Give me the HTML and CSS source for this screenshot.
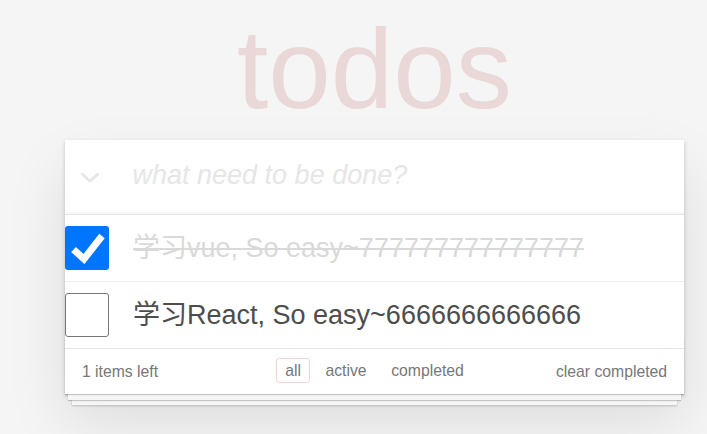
FILE: index.html
```html
<!DOCTYPE html>
<html lang="zh">
<head>
<meta charset="utf-8">
<title>todos</title>
<link rel="stylesheet" href="styles.css">
</head>
<body>
<section class="todoapp">
  <h1 class="title">todos</h1>
  <header class="header">
    <span class="toggle-all">
      <svg width="20" height="11" viewBox="0 0 20 11"><polyline points="1.5,1.5 10,9 18.5,1.5" fill="none" stroke="#e6e6e6" stroke-width="3"/></svg>
    </span>
    <input class="new-todo" placeholder="what need to be done?">
  </header>
  <ul class="todo-list">
    <li class="todo completed">
      <span class="check checked">
        <svg width="44" height="44" viewBox="0 0 44 44"><polyline points="8.5,23.5 19,33 37,10" fill="none" stroke="#fff" stroke-width="7"/></svg>
      </span>
      <label class="todo-label">学习vue, So easy~777777777777777</label>
    </li>
    <li class="todo">
      <span class="check"></span>
      <label class="todo-label">学习React, So easy~6666666666666</label>
    </li>
  </ul>
  <footer class="footer">
    <span class="todo-count">1 items left</span>
    <ul class="filters">
      <li><a class="filter selected">all</a></li>
      <li><a class="filter">active</a></li>
      <li><a class="filter">completed</a></li>
    </ul>
    <span class="clear-completed">clear completed</span>
  </footer>
</section>
</body>
</html>
```
FILE: styles.css
```css
html, body {
  margin: 0;
  padding: 0;
}
body {
  background: #f5f5f5;
  color: #4d4d4d;
  font-family: "Liberation Sans", Arial, "Noto Sans CJK SC", sans-serif;
  font-size: 15.75px;
  line-height: 22px;
  padding: 140px 23px 40px 65px;
}
.todoapp {
  position: relative;
  width: 619px;
  background: #fff;
  box-shadow: 0 2px 4px 0 rgba(0,0,0,0.2), 0 28px 56px 0 rgba(0,0,0,0.1);
}
.title {
  position: absolute;
  top: -127px;
  left: 0;
  right: 0;
  margin: 0;
  font-size: 112.5px;
  line-height: 112.5px;
  font-weight: normal;
  text-align: center;
  color: rgba(175,47,47,0.15);
}
.header {
  display: flex;
  align-items: center;
  height: 74px;
  box-shadow: inset 0 -2px 1px rgba(0,0,0,0.03);
}
.toggle-all {
  width: 67.5px;
  flex: none;
  display: flex;
  align-items: center;
  padding-left: 15px;
  box-sizing: border-box;
  margin-top: 1px;
}
.toggle-all svg { display: block; }
.new-todo {
  flex: 1;
  min-width: 0;
  border: none;
  outline: none;
  background: transparent;
  padding: 0 16px 4px 0;
  margin: 0;
  font-family: inherit;
  font-size: 27px;
  line-height: 37.8px;
  height: 70px;
  color: #4d4d4d;
}
.new-todo::placeholder {
  font-style: italic;
  color: #e6e6e6;
}
.todo-list {
  list-style: none;
  margin: 0;
  padding: 0;
  border-top: 1px solid #e6e6e6;
}
.todo {
  display: flex;
  align-items: center;
  font-size: 27px;
  border-bottom: 1px solid #ededed;
}
.todo:last-child { border-bottom: none; }
.check {
  flex: none;
  width: 44px;
  height: 44px;
  box-sizing: border-box;
  border: 1px solid #767676;
  border-radius: 3px;
  background: #fff;
}
.check.checked {
  border: none;
  background: #0075ff;
}
.check svg { display: block; }
.todo-label {
  display: block;
  padding: 16.875px 16.875px 16.875px 24px;
  line-height: 1.2;
  word-break: break-all;
}
.completed .todo-label {
  color: #d9d9d9;
  text-decoration: line-through;
}
.footer {
  position: relative;
  display: grid;
  grid-template-columns: 1fr auto 1fr;
  align-items: start;
  height: 22.5px;
  padding: 11.25px 16.875px;
  border-top: 1px solid #e6e6e6;
  color: #777;
}
.footer::before {
  content: "";
  position: absolute;
  right: 0;
  bottom: 0;
  left: 0;
  height: 56px;
  overflow: hidden;
  box-shadow: 0 1px 1px rgba(0,0,0,0.2),
              0 9px 0 -3px #f6f6f6,
              0 10px 1px -3px rgba(0,0,0,0.2),
              0 18px 0 -7px #f6f6f6,
              0 19px 2px -7px rgba(0,0,0,0.2);
  z-index: 0;
}
.todo-count, .filters, .clear-completed {
  position: relative;
  z-index: 1;
  line-height: 22px;
}
.todo-count { justify-self: start; }
.clear-completed { justify-self: end; }
.filters {
  list-style: none;
  margin: -2.5px 0 0;
  padding: 0;
  display: flex;
  align-items: center;
}
.filter {
  display: block;
  margin: 0 3.375px;
  padding: 0 7.875px;
  line-height: 23px;
  border: 1px solid transparent;
  border-radius: 3px;
  color: inherit;
}
.filter.selected {
  border-color: rgba(175,47,47,0.2);
}
```
